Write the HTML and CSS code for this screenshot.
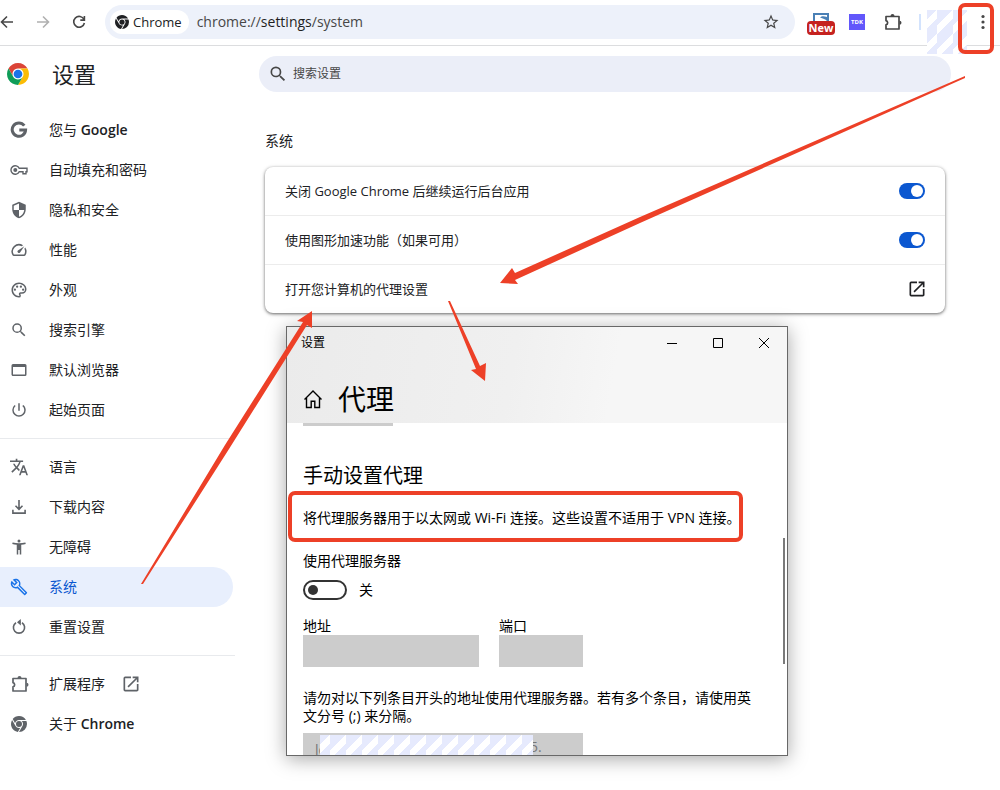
FILE: index.html
```
<!DOCTYPE html>
<html lang="zh-CN">
<head>
<meta charset="utf-8">
<meta name="viewport" content="width=device-width, initial-scale=1">
<title>设置 - 系统</title>
<link rel="stylesheet" href="styles.css">
</head>
<body>
<svg class="sprite" aria-hidden="true">
  <symbol id="chrome" viewBox="4 4 16 16"><path d="M12,20L15.46,14H15.45C15.79,13.4 16,12.73 16,12C16,10.8 15.46,9.73 14.62,9H19.41C19.79,9.93 20,10.94 20,12A8,8 0 0,1 12,20M4,12C4,10.54 4.39,9.18 5.07,8L8.54,14H8.55C9.24,15.19 10.5,16 12,16C12.45,16 12.88,15.91 13.29,15.77L10.89,19.91C7,19.37 4,16.04 4,12M15,12A3,3 0 0,1 12,15A3,3 0 0,1 9,12A3,3 0 0,1 12,9A3,3 0 0,1 15,12M12,4C14.96,4 17.54,5.61 18.92,8H12C10.06,8 8.45,9.38 8.08,11.21L5.7,7.08C7.16,5.21 9.44,4 12,4Z"/></symbol>
  <symbol id="search" viewBox="0 0 24 24"><path d="M15.5 14h-.79l-.28-.27A6.47 6.47 0 0 0 16 9.5 6.5 6.5 0 1 0 9.5 16c1.61 0 3.09-.59 4.23-1.57l.27.28v.79l5 4.99L20.49 19l-4.99-5zm-6 0a4.5 4.5 0 1 1 0-9 4.5 4.5 0 0 1 0 9z"/></symbol>
  <symbol id="puzzle" viewBox="0 0 20 20"><path fill="none" stroke="currentColor" stroke-width="1.7" stroke-linejoin="round" d="M3 4.500h13v12.500H3v-4.200a2.100 2.100 0 0 0 0-4.100z"/><path d="M7.500 4a2 2 0 0 1 4 0zM16.500 8.800a2 2 0 0 1 0 4z"/></symbol>
  <symbol id="open" viewBox="0 0 24 24"><path d="M19 19H5V5h7V3H5a2 2 0 0 0-2 2v14a2 2 0 0 0 2 2h14c1.1 0 2-.9 2-2v-7h-2v7zM14 3v2h3.59l-9.83 9.83 1.41 1.41L19 6.41V10h2V3h-7z"/></symbol>
</svg>

<header class="toolbar">
  <div class="nav">
    <button class="tool" aria-label="后退"><svg class="i16" viewBox="0 0 16 16"><path class="line" d="M14 8H2.500M8 2.500 2.500 8 8 13.500"/></svg></button>
    <button class="tool dim" aria-label="前进"><svg class="i16" viewBox="0 0 16 16"><path class="line" d="M2 8H13.500M8 2.500 13.500 8 8 13.500"/></svg></button>
    <button class="tool" aria-label="重新加载"><svg class="i16" viewBox="0 0 16 16"><path class="line" d="M13 5.500A5.400 5.400 0 1 0 13.400 9M13.400 2v4.100H9.300"/></svg></button>
  </div>
  <div class="omnibox">
    <span class="chip"><svg class="i14"><use href="#chrome"/></svg>Chrome</span>
    <span class="url">chrome://<b>settings</b>/system</span>
    <button class="tool" aria-label="收藏"><svg class="i18" viewBox="0 0 24 24"><path d="M22 9.240l-7.190-.62L12 2 9.190 8.630 2 9.240l5.460 4.730L5.820 21 12 17.270 18.180 21l-1.630-7.030L22 9.240zM12 15.400l-3.760 2.270 1-4.280-3.320-2.880 4.380-.38L12 6.100l1.710 4.040 4.380.38-3.320 2.880 1 4.280L12 15.400z"/></svg></button>
  </div>
  <div class="extensions">
    <button class="ext-new" aria-label="新扩展"><svg viewBox="0 0 16 8"><path fill="#fff" stroke="#4a80b5" stroke-width="2" d="M1 8V1h14v7"/><path fill="#4a80b5" d="M7 4.500c2-2 4-1.500 7-.500v4c-1.500-2-4-2.500-7-3.500z"/></svg><span>New</span></button>
    <button class="ext-tdk">TDK</button>
    <button class="tool" aria-label="扩展程序"><svg class="i20"><use href="#puzzle"/></svg></button>
    <i class="separator"></i>
    <i class="mosaic profile"></i>
    <button class="tool more" aria-label="更多"><svg class="i16" viewBox="0 0 16 16"><circle cx="8" cy="2.500" r="1.600"/><circle cx="8" cy="8" r="1.600"/><circle cx="8" cy="13.500" r="1.600"/></svg></button>
  </div>
</header>

<div class="page">
  <aside class="sidebar">
    <div class="brand">
      <svg class="logo" viewBox="0 0 48 48"><circle cx="24" cy="24" r="13" fill="#fff"/><path fill="#db4437" d="M24 12h20.780A24 24 0 0 0 3.220 12l10.390 18A12 12 0 0 1 24 12z"/><path fill="#fbbc05" d="M34.390 30 24 48a24 24 0 0 0 20.780-36H24a12 12 0 0 1 10.390 18z"/><path fill="#0f9d58" d="M13.610 30 3.220 12A24 24 0 0 0 24 48l10.390-18a12 12 0 0 1-20.780 0z"/><circle cx="24" cy="24" r="9.500" fill="#1a73e8"/></svg>
      <h1>设置</h1>
    </div>
    <nav class="menu">
      <a href="#you"><svg class="i18" viewBox="0 0 18 18"><path fill="none" stroke="currentColor" stroke-width="3" d="M14.300 4.600A6.700 6.700 0 1 0 15.600 8.900H9.300"/></svg><span>您与 <b>Google</b></span></a>
      <a href="#autofill"><svg class="i18" viewBox="0 0 18 18"><path fill="none" stroke="currentColor" stroke-width="1.400" d="M9.200 7.300H17v3.400h-1v2h-3v-2H9.200a4.300 4.300 0 1 1 0-3.400z"/><circle cx="5.300" cy="9" r="2"/></svg><span>自动填充和密码</span></a>
      <a href="#privacy"><svg class="i18" viewBox="0 0 24 24"><path d="M12 1 3 5v6c0 5.550 3.840 10.740 9 12 5.160-1.260 9-6.450 9-12V5l-9-4zm0 10.990h7c-.53 4.120-3.280 7.790-7 8.940V12H5V6.300l7-3.110v8.800z"/></svg><span>隐私和安全</span></a>
      <a href="#performance"><svg class="i18" viewBox="0 0 24 24"><path d="m20.380 8.570-1.230 1.850a8 8 0 0 1-.22 7.580H5.070A8 8 0 0 1 15.580 6.850l1.850-1.230A10 10 0 0 0 3.350 19a2 2 0 0 0 1.720 1h13.850a2 2 0 0 0 1.740-1 10 10 0 0 0-.27-10.440zM10.590 15.410a2 2 0 0 0 2.830 0l5.660-8.490-8.490 5.660a2 2 0 0 0 0 2.830z"/></svg><span>性能</span></a>
      <a href="#appearance"><svg class="i18" viewBox="0 0 24 24"><path d="M12 22C6.490 22 2 17.510 2 12S6.490 2 12 2s10 4.040 10 9c0 3.310-2.690 6-6 6h-1.770a.5.5 0 0 0-.38.83c.41.47.64 1.060.64 1.670A2.500 2.500 0 0 1 12 22zm0-18a8 8 0 0 0 0 16 .5.500 0 0 0 .38-.84 2.500 2.500 0 0 1 1.850-4.160H16a4 4 0 0 0 4-4c0-3.860-3.590-7-8-7z"/><circle cx="6.500" cy="11.500" r="1.500"/><circle cx="9.500" cy="7.500" r="1.500"/><circle cx="14.500" cy="7.500" r="1.500"/><circle cx="17.500" cy="11.500" r="1.500"/></svg><span>外观</span></a>
      <a href="#engine"><svg class="i18"><use href="#search"/></svg><span>搜索引擎</span></a>
      <a href="#default"><svg class="i18" viewBox="0 0 24 24"><path d="M20 4H4a2 2 0 0 0-2 2v12c0 1.100.9 2 2 2h16a2 2 0 0 0 2-2V6a2 2 0 0 0-2-2zm0 14H4V8h16v10z"/></svg><span>默认浏览器</span></a>
      <a href="#startup"><svg class="i18" viewBox="0 0 24 24"><path d="M13 3h-2v10h2V3zm4.830 2.170-1.420 1.420A6.920 6.920 0 0 1 19 12a7 7 0 1 1-11.420-5.420L6.170 5.170A8.930 8.930 0 0 0 3 12a9 9 0 1 0 18 0c0-2.740-1.230-5.180-3.170-6.830z"/></svg><span>起始页面</span></a>
      <hr>
      <a href="#languages"><svg class="i18" viewBox="1 1 22 22"><path d="m12.870 15.070-2.540-2.510.03-.03A17.520 17.520 0 0 0 14.070 6H17V4h-7V2H8v2H1v1.990h11.170A15.640 15.640 0 0 1 9 11.350 15.650 15.650 0 0 1 6.690 8h-2a17.600 17.600 0 0 0 2.980 4.560l-5.090 5.020L4 19l5-5 3.110 3.110.76-2.040zM18.500 10h-2L12 22h2l1.120-3h4.750L21 22h2l-4.500-12zm-2.620 7 1.620-4.330L19.120 17h-3.240z"/></svg><span>语言</span></a>
      <a href="#downloads"><svg class="i18" viewBox="0 0 18 18"><path class="line" d="M9 2v9M5.500 7.800 9 11.300l3.500-3.500M2.900 11.800v3.300h12.200v-3.300"/></svg><span>下载内容</span></a>
      <a href="#a11y"><svg class="i18" viewBox="0 0 24 24"><path d="M20.500 6c-2.610.7-5.670 1-8.500 1s-5.890-.3-8.500-1L3 8c1.860.5 4 .83 6 1v13h2v-6h2v6h2V9c2-.17 4.140-.5 6-1l-.5-2zM12 6a2 2 0 1 0 0-4 2 2 0 0 0 0 4z"/></svg><span>无障碍</span></a>
      <a class="active" href="#system" aria-current="page"><svg class="i18" viewBox="0 0 24 24"><path d="m22.610 18.990-9.080-9.080c.93-2.340.45-5.100-1.440-7C9.790.610 6.210.4 3.660 2.260L7.500 6.110 6.080 7.520 2.250 3.690C.39 6.230.6 9.820 2.900 12.110c1.860 1.860 4.570 2.350 6.890 1.480l9.110 9.110c.39.39 1.020.39 1.410 0l2.300-2.300c.4-.38.400-1.010 0-1.410zm-3 1.600-9.460-9.460c-.61.45-1.290.72-2 .82-1.360.2-2.790-.21-3.830-1.250A4.360 4.360 0 0 1 3.090 7.360l3.010 3.010 4.240-4.240-3.010-3.010a4.400 4.400 0 0 1 3.340 1.200 4.400 4.400 0 0 1 .42 5.790l9.450 9.450-.93 1.030z"/></svg><span>系统</span></a>
      <a href="#reset"><svg class="i18" viewBox="0 0 18 18"><path class="line" d="M9 4.200h1.500M6 4.800a5.600 5.600 0 1 0 6 0"/><path d="M10.800 1v6.400L7 4.200z"/></svg><span>重置设置</span></a>
      <hr>
      <a href="#extensions"><svg class="i20"><use href="#puzzle"/></svg><span>扩展程序</span><svg class="i20"><use href="#open"/></svg></a>
      <a href="#about"><svg class="i16"><use href="#chrome"/></svg><span>关于 <b>Chrome</b></span></a>
    </nav>
  </aside>

  <main class="content">
    <label class="search"><svg class="i20"><use href="#search"/></svg><input type="search" placeholder="搜索设置" aria-label="搜索设置"></label>
    <section>
      <h2>系统</h2>
      <div class="card">
        <label class="row">关闭 Google Chrome 后继续运行后台应用<input class="switch" type="checkbox" checked></label>
        <label class="row">使用图形加速功能（如果可用）<input class="switch" type="checkbox" checked></label>
        <a class="row" href="#proxy">打开您计算机的代理设置<svg class="i20"><use href="#open"/></svg></a>
      </div>
    </section>
  </main>
</div>

<div class="window" role="dialog" aria-labelledby="window-title">
  <div class="window-head">
    <div class="titlebar">
      <span id="window-title">设置</span>
      <button aria-label="最小化"><svg class="i12" viewBox="0 0 12 12"><path d="M1 6.500h10"/></svg></button>
      <button aria-label="最大化"><svg class="i12" viewBox="0 0 12 12"><path d="M1.500 1.500h9v9h-9z"/></svg></button>
      <button aria-label="关闭"><svg class="i12" viewBox="0 0 12 12"><path d="m1 1 10 10M11 1 1 11"/></svg></button>
    </div>
    <div class="window-heading">
      <svg class="i20" viewBox="0 0 20 20"><path d="M1.500 10.500 10 2l8.500 8.500M3.500 9v9.500h4.700v-6.300h3.600v6.300h4.700V9"/></svg>
      <h2>代理</h2>
    </div>
  </div>
  <form class="proxy">
    <i class="stub"></i>
    <h3>手动设置代理</h3>
    <p class="hint">将代理服务器用于以太网或 Wi-Fi 连接。这些设置不适用于 VPN 连接。</p>
    <label class="use" for="use-proxy">使用代理服务器</label>
    <div class="toggle-row"><input id="use-proxy" class="toggle" type="checkbox"><span>关</span></div>
    <div class="fields">
      <label class="address">地址<input type="text" disabled></label>
      <label class="port">端口<input type="text" disabled></label>
    </div>
    <label class="exceptions"><span>请勿对以下列条目开头的地址使用代理服务器。若有多个条目，请使用英文分号 (;) 来分隔。</span>
      <span class="masked"><input type="text" disabled value="lo"><span class="tail">5.</span><i class="mosaic"></i></span>
    </label>
  </form>
  <i class="scroll-thumb"></i>
</div>

<svg class="annotations" viewBox="0 0 1000 790" aria-hidden="true">
  <path d="M965 76 640 217 515 273 512 268 500 283 518 284 515 280 640 223 965 78z"/>
  <path d="M141 584 225 445 303 322 297 321 312 311 312 328 307 325 229 449 143 584z"/>
  <path d="M448 301 476 369 471 370 485 381 486 363 480 366 450 301z"/>
  <rect x="960" y="5" width="32" height="47" rx="5"/>
  <rect x="290" y="493" width="451" height="47" rx="5"/>
</svg>
</body>
</html>
```
FILE: styles.css
```
* { box-sizing: border-box; }
body {
  margin: 0;
  min-height: 100vh;
  position: relative;
  overflow: hidden;
  background: #fff;
  color: #202124;
  font: 14px/20px "Open Sans", "Noto Sans CJK SC", sans-serif;
}
h1, h2, h3, p { margin: 0; font-weight: 400; }
button { border: 0; padding: 0; background: none; color: inherit; font: inherit; }
input { font: inherit; margin: 0; }
a { color: inherit; text-decoration: none; }
svg { display: block; flex: none; fill: currentColor; }
.sprite { position: absolute; width: 0; height: 0; }
.line { fill: none; stroke: currentColor; stroke-width: 1.6; }
.i12 { width: 12px; height: 12px; }
.i14 { width: 14px; height: 14px; }
.i16 { width: 16px; height: 16px; }
.i18 { width: 18px; height: 18px; }
.i20 { width: 20px; height: 20px; }

/* Browser toolbar */
.toolbar {
  display: flex;
  align-items: center;
  height: 46px;
  padding-bottom: 1px;
  border-bottom: 1px solid #dcdddf;
}
.nav { display: flex; gap: 20px; width: 106px; flex: none; margin-left: -1px; }
.tool { display: grid; place-items: center; color: #474747; }
.dim { color: #b0b0b0; }
.omnibox {
  display: flex;
  align-items: center;
  flex: 1;
  height: 34px;
  padding: 0 15px 0 5px;
  border-radius: 17px;
  background: #edf1fa;
}
.chip {
  display: flex;
  align-items: center;
  gap: 4px;
  height: 24px;
  padding: 0 7px 0 5px;
  border-radius: 12px;
  background: #fff;
  font-size: 13px;
}
.url { flex: 1; margin-left: 8px; color: #474747; font-size: 14px; }
.url b { color: #1f1f1f; font-weight: 400; }
.extensions { display: flex; align-items: center; width: 205px; flex: none; padding-left: 12px; }
.ext-new { width: 28px; display: grid; justify-items: center; margin-top: 3px; }
.ext-new svg { width: 16px; height: 8px; }
.ext-new span {
  width: 28px;
  border-radius: 4px;
  background: #c5221f;
  color: #fff;
  font-size: 11px;
  font-weight: 700;
  line-height: 14px;
}
.ext-tdk {
  width: 16px;
  height: 16px;
  margin: 0 18px 0 14px;
  background: #6257fb;
  color: #fff;
  font-size: 6px;
  font-weight: 700;
  line-height: 16px;
}
.separator { width: 2px; height: 16px; margin: 0 6px 0 16px; background: #d3e3fd; }
.mosaic {
  background: linear-gradient(135deg, #e6eafd 0 40%, #fff 40% 62%, #e6eafd 62%) 10px 0 / 16px 24px;
}
.profile { width: 40px; height: 44px; align-self: flex-start; flex: none; margin: 10px 0 -10px; }
.more { margin-left: 8px; }

/* Settings page */
.page { display: flex; }
.sidebar { width: 235px; flex: none; }
.brand { display: flex; align-items: center; gap: 23px; height: 56px; padding-left: 7px; }
.logo { width: 22px; height: 22px; }
h1 { font-size: 22px; line-height: 32px; }
.menu { padding-top: 8px; }
.menu a {
  display: flex;
  align-items: center;
  height: 40px;
  margin-right: 2px;
  padding-left: 10px;
  border-radius: 0 20px 20px 0;
}
.menu a > svg { color: #5f6368; }
.menu .i18 { margin-right: 21px; }
.menu .i20 { margin-right: 19px; }
.menu .i16 { margin-right: 22px; margin-left: 1px; }
.menu span + .i20 { margin: 0 0 0 16px; }
.menu b { font-weight: 600; }
.menu hr { margin: 8px 0; border: 0; border-top: 1px solid #e8eaed; }
.menu .active { background: #e8effd; color: #0b57d0; }
.menu .active > svg { color: #1a73e8; }

.content { flex: 1; padding: 10px 49px 0 24px; font-size: 13px; }
.search {
  display: flex;
  align-items: center;
  gap: 3px;
  height: 36px;
  padding: 0 9px;
  border-radius: 18px;
  background: #ebeef8;
  color: #474747;
}
.search input { flex: 1; border: 0; outline: 0; background: none; font-size: 12px; }
.search input::placeholder { color: #474747; }
section { padding: 39px 6px 0; }
section h2 { font-size: 14px; margin-bottom: 16px; }
.card {
  border-radius: 8px;
  background: #fff;
  box-shadow: 0 1px 3px rgba(0, 0, 0, .5), 0 1px 5px rgba(0, 0, 0, .15);
}
.row { display: flex; align-items: center; justify-content: space-between; height: 48px; padding: 0 20px; }
.row + .row { height: 49px; border-top: 1px solid #ececec; }
.row .i20 { margin-right: -2px; }
.switch {
  appearance: none;
  display: flex;
  justify-content: flex-end;
  width: 26px;
  height: 16px;
  padding: 2px;
  border-radius: 8px;
  background: #0b57d0;
}
.switch::before { content: ""; width: 12px; height: 12px; border-radius: 50%; background: #fff; }

/* Proxy window */
.window {
  position: absolute;
  left: 286px;
  top: 326px;
  width: 502px;
  height: 430px;
  overflow: hidden;
  border: 1px solid #686868;
  background: #fff;
  color: #000;
  box-shadow: 0 3px 18px rgba(0, 0, 0, .35);
}
.window-head { height: 96px; background: linear-gradient(100deg, #ebebeb, #f0f0f0 45%, #f6f6f6 65%); }
.titlebar { display: flex; align-items: center; height: 32px; padding-left: 14px; font-size: 12px; }
.titlebar span { flex: 1; }
.titlebar button { display: grid; place-items: center; width: 46px; height: 32px; }
.titlebar svg, .window-heading svg { fill: none; stroke: #000; stroke-width: 1; }
.window-heading { display: flex; align-items: center; gap: 15px; height: 64px; padding: 16px 16px 0; }
.window-heading svg { stroke-width: 1.4; }
.window-heading h2 { font-size: 28px; line-height: 40px; }
.proxy { padding: 0 32px 0 16px; }
.stub { display: block; width: 90px; height: 3px; background: #ccc; }
.proxy h3 { margin-top: 36px; font-size: 20px; line-height: 28px; }
.hint { margin-top: 18px; white-space: nowrap; }
.use { display: block; margin-top: 23px; }
.toggle-row { display: flex; align-items: center; gap: 12px; margin-top: 9px; }
.toggle {
  appearance: none;
  display: flex;
  align-items: center;
  width: 44px;
  height: 20px;
  padding-left: 3px;
  border: 2px solid #333;
  border-radius: 10px;
}
.toggle::before { content: ""; width: 10px; height: 10px; border-radius: 50%; background: #333; }
.fields { display: flex; gap: 20px; margin-top: 17px; line-height: 18px; }
.address { width: 176px; }
.port { width: 84px; }
.proxy input[type="text"] {
  display: block;
  width: 100%;
  height: 32px;
  padding: 0 12px;
  border: 0;
  border-radius: 0;
  background: #ccc;
  color: #777;
}
.exceptions { display: block; margin-top: 22px; line-height: 18px; }
.masked { display: block; position: relative; width: 280px; margin-top: 8px; }
.masked .mosaic { position: absolute; left: 17px; top: 2px; width: 213px; height: 30px; }
.tail { position: absolute; left: 227px; top: 6px; color: #777; line-height: 16px; }
.scroll-thumb { position: absolute; right: 2px; top: 211px; width: 2px; height: 126px; background: #7a7a7a; }

/* Arrows and highlight boxes */
.annotations { position: absolute; left: 0; top: 0; width: 1000px; height: 790px; pointer-events: none; fill: #ed4027; }
.annotations rect { fill: none; stroke: #ed4027; stroke-width: 4; }
```
